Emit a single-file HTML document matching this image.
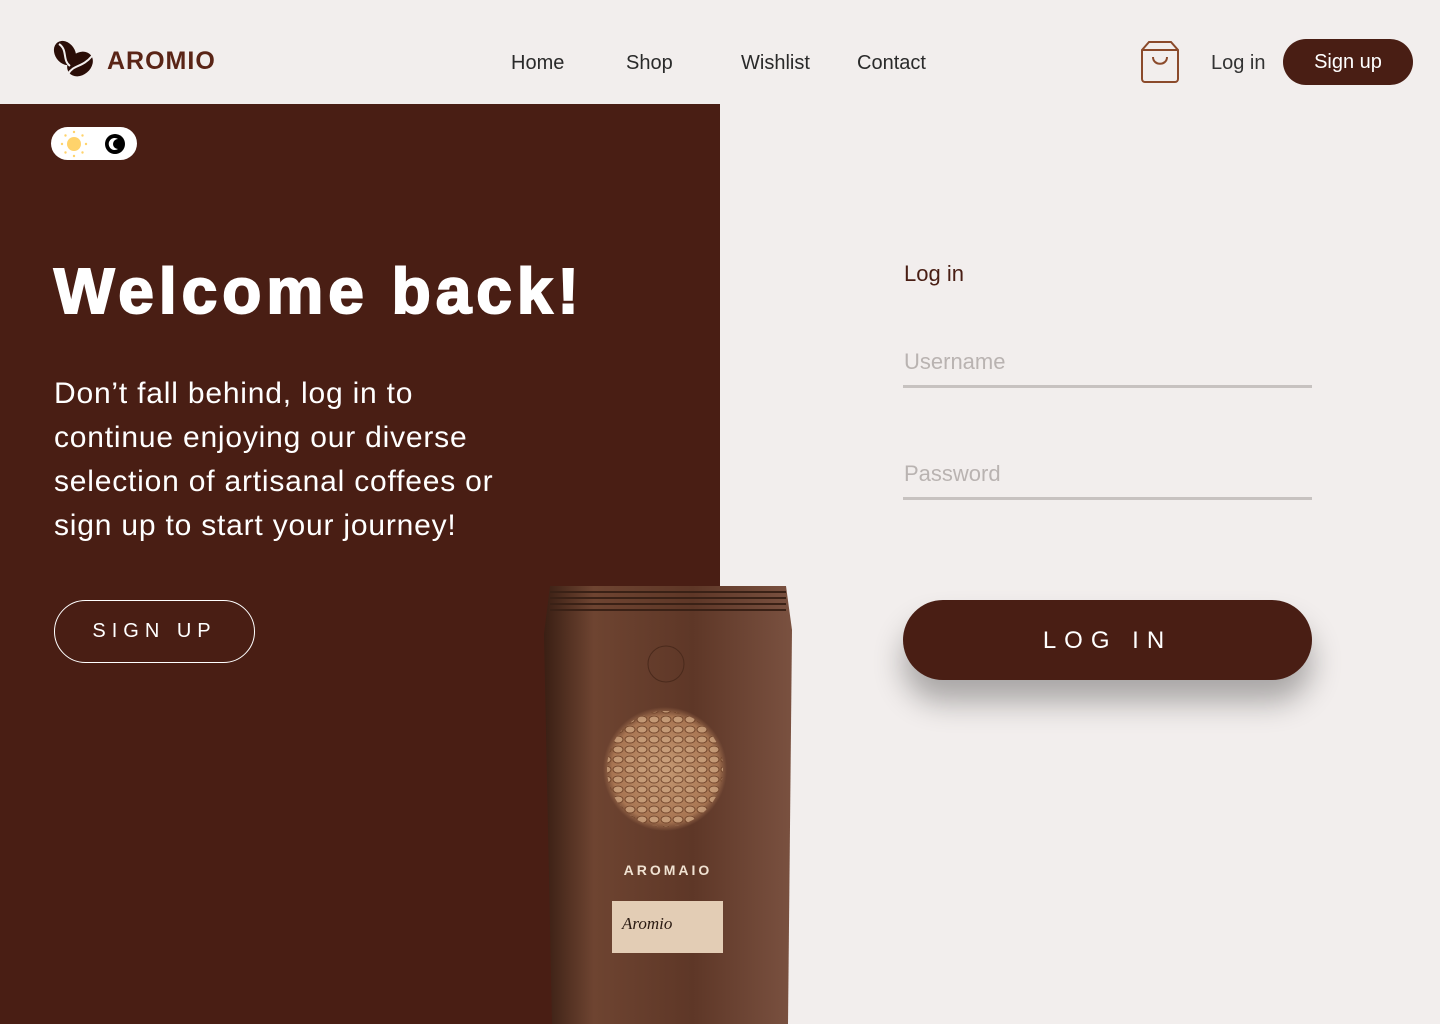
<!DOCTYPE html>
<html><head><meta charset="utf-8"><style>
*{margin:0;padding:0;box-sizing:border-box}
body{width:1440px;height:1024px;overflow:hidden;background:#f2eeed;font-family:"Liberation Sans",sans-serif;position:relative}
.nav a{position:absolute;top:52px;font-size:20px;color:#2a2a2a;text-decoration:none}
.left{position:absolute;left:0;top:104px;width:720px;height:920px;background:#491e14}
</style></head><body>
<svg style="position:absolute;left:52px;top:40px" width="44" height="40" viewBox="0 0 44 40">
<g fill="#2a0d07"><ellipse cx="13" cy="13" rx="10" ry="13" transform="rotate(-35 13 13)"/><ellipse cx="28" cy="24" rx="11" ry="14" transform="rotate(50 28 24)"/></g>
<path d="M7 4 C16 10 10 20 18 26" stroke="#f2eeed" stroke-width="2" fill="none"/><path d="M16 34 C22 24 30 28 40 16" stroke="#f2eeed" stroke-width="2" fill="none"/></svg>
<div style="position:absolute;left:107px;top:47px;font-size:25px;font-weight:900;color:#5a2416;letter-spacing:1px">AROMIO</div>
<div class="nav"><a style="left:511px">Home</a><a style="left:626px">Shop</a><a style="left:741px">Wishlist</a><a style="left:857px">Contact</a></div>
<svg style="position:absolute;left:1141px;top:41px" width="38" height="42" viewBox="0 0 38 42" fill="none" stroke="#8b4a2b" stroke-width="2"><path d="M8 1h22l7 8v29a3 3 0 0 1-3 3H4a3 3 0 0 1-3-3V9z M1 9h36"/><path d="M12 16c0 9 14 9 14 0"/></svg>
<div style="position:absolute;left:1211px;top:52px;font-size:20px;color:#333">Log in</div>
<div style="position:absolute;left:1283px;top:39px;width:130px;height:46px;border-radius:23px;background:#491e14;color:#fff;font-size:20px;text-align:center;line-height:46px">Sign up</div>
<div class="left"></div>
<div style="position:absolute;left:51px;top:127px;width:86px;height:33px;border-radius:17px;background:#fff"></div>
<svg style="position:absolute;left:60px;top:130px" width="28" height="28" viewBox="0 0 28 28"><circle cx="14" cy="14" r="7" fill="#ffd36b"/><g fill="#ffd36b"><circle cx="14" cy="2" r="1.2"/><circle cx="14" cy="26" r="1.2"/><circle cx="2" cy="14" r="1.2"/><circle cx="26" cy="14" r="1.2"/><circle cx="5.5" cy="5.5" r="1.2"/><circle cx="22.5" cy="22.5" r="1.2"/><circle cx="22.5" cy="5.5" r="1.2"/><circle cx="5.5" cy="22.5" r="1.2"/></g></svg>
<svg style="position:absolute;left:104px;top:133px" width="22" height="22" viewBox="0 0 22 22"><circle cx="11" cy="11" r="10" fill="#000"/><path d="M14 6a6 6 0 1 0 0 10a5 5 0 1 1 0-10z" fill="#fff"/></svg>
<div style="position:absolute;left:54px;top:254px;font-size:64px;font-weight:900;color:#fff;letter-spacing:5px;-webkit-text-stroke:2px #fff;white-space:nowrap">Welcome back!</div>
<div style="position:absolute;left:54px;top:372px;font-size:30px;line-height:44px;color:#fff;white-space:nowrap;letter-spacing:0.8px">Don’t fall behind, log in to<br>continue enjoying our diverse<br>selection of artisanal coffees or<br>sign up to start your journey!</div>
<div style="position:absolute;left:54px;top:600px;width:201px;height:63px;border:1.5px solid #fff;border-radius:32px;color:#fff;font-size:20px;letter-spacing:6px;text-align:center;line-height:60px">SIGN UP</div>
<svg style="position:absolute;left:540px;top:584px" width="256" height="440" viewBox="0 0 256 440">
<defs><linearGradient id="g" x1="0" x2="1"><stop offset="0" stop-color="#3a1f14"/><stop offset=".2" stop-color="#6e4431"/><stop offset=".6" stop-color="#5e3727"/><stop offset="1" stop-color="#7a5140"/></linearGradient>
<radialGradient id="b"><stop offset="0" stop-color="#c49872"/><stop offset=".85" stop-color="#a87552"/><stop offset="1" stop-color="#a87552" stop-opacity="0"/></radialGradient>
<pattern id="p" width="12" height="10" patternUnits="userSpaceOnUse"><ellipse cx="6" cy="5" rx="5" ry="3.8" fill="#c9a07c"/><ellipse cx="6" cy="5.5" rx="5" ry="3.5" fill="none" stroke="#6b3f26" stroke-width="1"/></pattern></defs>
<path d="M10 2h236l6 44-4 394H12L4 50z" fill="url(#g)"/>
<path d="M10 8h236M10 14h236M10 20h236M10 26h236" stroke="#3a2116" stroke-width="2"/>
<circle cx="126" cy="80" r="18" fill="none" stroke="#4a2a1c"/>
<circle cx="125" cy="185" r="62" fill="url(#b)"/>
<circle cx="125" cy="185" r="58" fill="url(#p)" opacity=".85"/>
<text x="128" y="291" text-anchor="middle" fill="#f0e2d2" font-size="14" font-weight="700" letter-spacing="3" font-family="Liberation Sans">AROMAIO</text>
<rect x="72" y="317" width="111" height="52" fill="#e3cdb5"/>
<text x="82" y="345" fill="#2a1a12" font-size="17" font-style="italic" font-family="Liberation Serif">Aromio</text>
</svg>
<div style="position:absolute;left:904px;top:261px;font-size:22px;color:#491e14">Log in</div>
<div style="position:absolute;left:904px;top:349px;font-size:22px;color:#b9b3b1">Username</div>
<div style="position:absolute;left:903px;top:385px;width:409px;height:3px;background:#c7c2c0"></div>
<div style="position:absolute;left:904px;top:461px;font-size:22px;color:#b9b3b1">Password</div>
<div style="position:absolute;left:903px;top:497px;width:409px;height:3px;background:#c7c2c0"></div>
<div style="position:absolute;left:903px;top:600px;width:409px;height:80px;border-radius:40px;background:#491e14;color:#fff;font-size:24px;letter-spacing:8px;text-align:center;line-height:82px;box-shadow:0 22px 30px rgba(0,0,0,.3)">LOG IN</div>
</body></html>
